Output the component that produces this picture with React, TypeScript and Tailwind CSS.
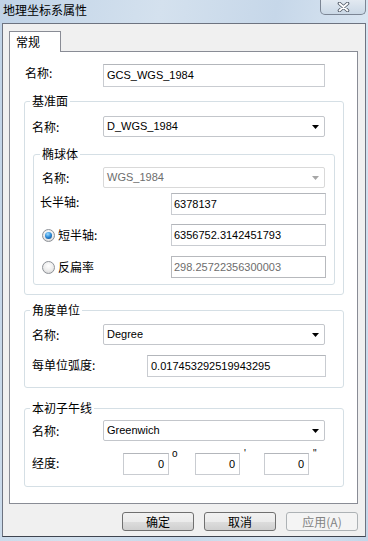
import React from "react";

function Arrow({ disabled = false }: { disabled?: boolean }) {
  return (
    <svg width="7" height="4" viewBox="0 0 7 4">
      <path d="M0 0h7L3.5 4z" fill={disabled ? "#a6a6a6" : "#000"} />
    </svg>
  );
}

function Combo({ value, disabled = false }: { value: string; disabled?: boolean }) {
  return (
    <div
      className={
        disabled
          ? "w-[222px] h-[21px] flex items-center justify-between pl-[3px] pr-[5px] rounded-[2px] border border-[#d9d9d9] bg-white text-[#6d6d6d]"
          : "w-[222px] h-[21px] flex items-center justify-between pl-[3px] pr-[5px] rounded-[2px] border border-[#c3c6cb] bg-white text-black"
      }
    >
      <span className="font-['Liberation_Sans',sans-serif] text-[11px] leading-[13px]">{value}</span>
      <Arrow disabled={disabled} />
    </div>
  );
}

function Radio({ checked = false }: { checked?: boolean }) {
  return (
    <span className="w-[13px] h-[13px] rounded-full border border-[#8e9298] bg-[radial-gradient(circle_at_50%_35%,#ffffff_0%,#ececec_55%,#cdcdcd_100%)] flex items-center justify-center">
      {checked && (
        <span className="w-[7px] h-[7px] rounded-full bg-[radial-gradient(circle_at_40%_30%,#9edcff_0%,#2a88d6_50%,#0d3e78_100%)]" />
      )}
    </span>
  );
}

const box =
  "h-[22px] flex items-center border border-[#c9ccd1] border-t-[#b3b6bb] bg-white font-['Liberation_Sans',sans-serif] text-[11px] leading-[13px]";

export default function App() {
  return (
    <div className="w-[368px] h-[541px] flex flex-col overflow-hidden bg-[linear-gradient(100deg,#c0d3e7_0%,#d4e1ee_35%,#c6d7e9_60%,#d9e5f1_80%,#c4d6e9_100%)] font-['Noto_Sans_CJK_SC',sans-serif] text-[12px] text-black">
      {/* title bar */}
      <div className="h-[23px] flex items-start shrink-0">
        <span className="pl-[3px] pt-[2px] leading-[16px] text-[12px]">地理坐标系属性</span>
        <div className="ml-auto mr-[2px] w-[46px] h-[15px] rounded-b-[5px] border border-t-0 border-[#7b8594] bg-gradient-to-b from-[#e2e9f1] to-[#cad8e6] flex items-center justify-center">
          <svg width="13" height="10" viewBox="0 0 13 10">
            <path d="M2.5 1.5L10.5 8.5M10.5 1.5L2.5 8.5" stroke="#535c69" strokeWidth="3.6" strokeLinecap="round" />
            <path d="M2.5 1.5L10.5 8.5M10.5 1.5L2.5 8.5" stroke="#ffffff" strokeWidth="1.8" strokeLinecap="round" />
          </svg>
        </div>
      </div>

      {/* window body */}
      <div className="ml-[2px] w-[364px] h-[514px] shrink-0 border border-[#6d7380] border-b-[#3f4550] bg-[#f0f0f0] pl-[6px] pt-[7px] flex flex-col">
        {/* tab */}
        <div className="relative z-10 -mb-px w-[52px] h-[21px] border border-b-0 border-[#898c95] bg-white pl-[6px] pt-[2px] leading-[16px]">
          常规
        </div>

        {/* tab panel */}
        <div className="w-[349px] h-[453px] border border-[#898c95] bg-white flex flex-col">
          <div className="mt-[12px] flex items-center">
            <span className="pl-[15px] w-[93px] leading-[16px] mb-[6px]">名称:</span>
            <div className={box + " w-[222px] h-[23px] pl-[3px]"}>GCS_WGS_1984</div>
          </div>

          {/* 基准面 */}
          <fieldset className="ml-[14px] mt-[7px] w-[320px] h-[201px] border border-[#d5dfe5] rounded-[3px] flex flex-col">
            <legend className="ml-[5px] px-[2px] leading-[14px]">基准面</legend>
            <div className="mt-[8px] flex items-center">
              <span className="pl-[7px] w-[78px] leading-[16px]">名称:</span>
              <Combo value="D_WGS_1984" />
            </div>

            <fieldset className="ml-[8px] mt-[10px] w-[302px] h-[138px] border border-[#d5dfe5] rounded-[3px] flex flex-col">
              <legend className="ml-[6px] px-[2px] leading-[14px]">椭球体</legend>
              <div className="mt-[6px] flex items-center">
                <span className="pl-[8px] w-[69px] leading-[16px]">名称:</span>
                <Combo value="WGS_1984" disabled />
              </div>
              <div className="mt-[5px] flex items-center">
                <span className="pl-[6px] w-[137px] leading-[16px] mb-[4px]">长半轴:</span>
                <div className={box + " w-[155px] pl-[2px]"}>6378137</div>
              </div>
              <div className="mt-[9px] flex items-center">
                <div className="pl-[8px] w-[137px] flex items-center gap-[3px]">
                  <Radio checked />
                  <span className="leading-[16px]">短半轴:</span>
                </div>
                <div className={box + " w-[155px] pl-[2px]"}>6356752.3142451793</div>
              </div>
              <div className="mt-[10px] flex items-center">
                <div className="pl-[8px] w-[137px] flex items-center gap-[3px]">
                  <Radio />
                  <span className="leading-[16px]">反扁率</span>
                </div>
                <div className="w-[155px] h-[22px] flex items-center pl-[2px] border border-[#b7b9bd] bg-white text-[#6d6d6d] font-['Liberation_Sans',sans-serif] text-[11px] leading-[13px]">
                  298.25722356300003
                </div>
              </div>
            </fieldset>
          </fieldset>

          {/* 角度单位 */}
          <fieldset className="ml-[14px] mt-[8px] w-[320px] h-[85px] border border-[#d5dfe5] rounded-[3px] flex flex-col">
            <legend className="ml-[5px] px-[2px] leading-[14px]">角度单位</legend>
            <div className="mt-[7px] flex items-center">
              <span className="pl-[7px] w-[78px] leading-[16px]">名称:</span>
              <Combo value="Degree" />
            </div>
            <div className="mt-[10px] flex items-center">
              <span className="pl-[7px] w-[122px] leading-[16px] mb-[3px]">每单位弧度:</span>
              <div className={box + " w-[179px] pl-[3px]"}>0.017453292519943295</div>
            </div>
          </fieldset>

          {/* 本初子午线 */}
          <fieldset className="ml-[14px] mt-[13px] w-[320px] h-[86px] border border-[#d5dfe5] rounded-[3px] flex flex-col">
            <legend className="ml-[5px] px-[2px] leading-[14px]">本初子午线</legend>
            <div className="mt-[5px] flex items-center">
              <span className="pl-[7px] w-[78px] leading-[16px]">名称:</span>
              <Combo value="Greenwich" />
            </div>
            <div className="mt-[12px] flex items-center">
              <span className="pl-[7px] w-[98px] leading-[16px] mb-[3px]">经度:</span>
              <div className={box + " w-[46px] justify-end pr-[4px]"}>0</div>
              <span className="w-[26px] self-start -mt-[5px] pl-[3px] font-['Liberation_Sans',sans-serif] text-[10px] leading-[12px]">o</span>
              <div className={box + " w-[45px] justify-end pr-[4px]"}>0</div>
              <span className="w-[24px] self-start -mt-[5px] pl-[4px] font-['Liberation_Sans',sans-serif] text-[10px] leading-[12px]">'</span>
              <div className={box + " w-[45px] justify-end pr-[4px]"}>0</div>
              <span className="self-start -mt-[5px] pl-[4px] font-['Liberation_Sans',sans-serif] text-[10px] leading-[12px]">"</span>
            </div>
          </fieldset>
        </div>

        {/* buttons */}
        <div className="mt-[8px] w-[349px] flex justify-end gap-[10px]">
          <button className="w-[72px] h-[19px] rounded-[3px] border border-[#707070] bg-[linear-gradient(#f2f2f2_0%,#ebebeb_50%,#dddddd_51%,#cfcfcf_100%)] leading-[16px]">
            确定
          </button>
          <button className="w-[72px] h-[19px] rounded-[3px] border border-[#707070] bg-[linear-gradient(#f2f2f2_0%,#ebebeb_50%,#dddddd_51%,#cfcfcf_100%)] leading-[16px]">
            取消
          </button>
          <button className="w-[72px] h-[19px] rounded-[3px] border border-[#adb2b5] bg-[#f4f4f4] text-[#838383] leading-[16px]">
            应用(A)
          </button>
        </div>
      </div>
    </div>
  );
}
